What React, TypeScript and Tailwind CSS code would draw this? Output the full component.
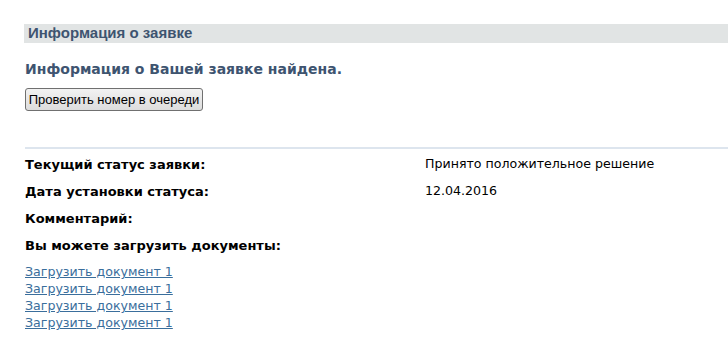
const rows = [
  { label: 'Текущий статус заявки:', value: 'Принято положительное решение' },
  { label: 'Дата установки статуса:', value: '12.04.2016' },
  { label: 'Комментарий:', value: '' },
  { label: 'Вы можете загрузить документы:', value: '' },
];

const App = () => {
  return (
    <div className="w-[728px] h-[344px] bg-white overflow-hidden pt-[24px] pl-[24px] font-['DejaVu_Sans',Verdana,sans-serif] text-[12.6px] text-black">
      <div className="h-[19px] bg-[#e1e4e4] pl-[4px] flex items-center">
        <span className="font-['Liberation_Sans',Arial,sans-serif] font-bold text-[15px] text-[#3e5470]">
          Информация о заявке
        </span>
      </div>

      <div className="pl-[1px]">
        <h2 className="mt-[17px] font-bold text-[14px] leading-[18px] text-[#3e5470]">
          Информация о Вашей заявке найдена.
        </h2>

        <button className="mt-[10px] h-[23px] w-[178px] whitespace-nowrap border border-[#707070] rounded-[3px] bg-gradient-to-b from-[#f2f2f2] to-[#dddddd] font-['Liberation_Sans',Tahoma,sans-serif] text-[13px] text-black">
          Проверить номер в очереди
        </button>
      </div>

      <div className="mt-[36px] ml-[1px] h-[2px] bg-[#dde5ee]" />

      <div className="pl-[1px] pt-[2px]">
        {rows.map((row) => (
          <div key={row.label} className="flex h-[27px] items-center">
            <span className="w-[400px] font-bold text-[13px]">{row.label}</span>
            <span>{row.value}</span>
          </div>
        ))}

        <div className="mt-[4px] flex flex-col leading-[17px]">
          {[1, 2, 3, 4].map((i) => (
            <a key={i} href="#" className="underline text-[#3a6e9c] w-fit">
              Загрузить документ 1
            </a>
          ))}
        </div>
      </div>
    </div>
  );
};

export default App;
